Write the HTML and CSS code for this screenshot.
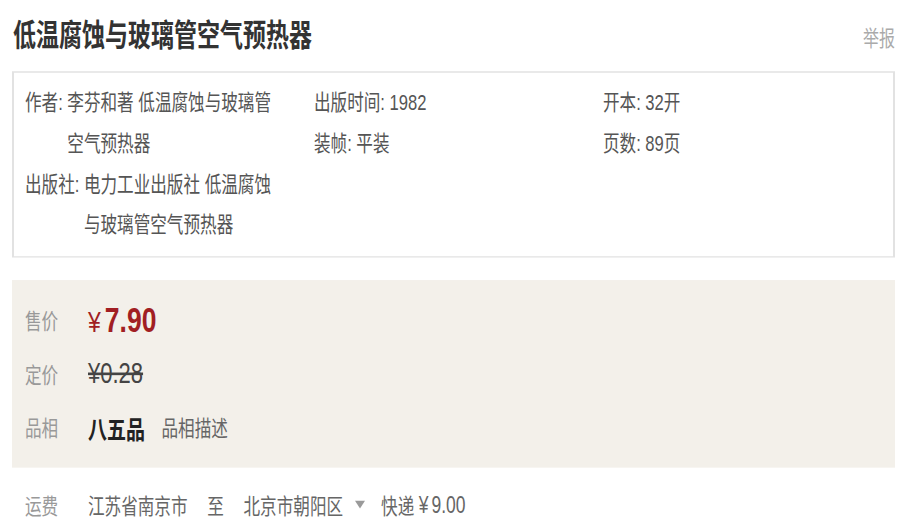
FILE: index.html
```html
<!DOCTYPE html>
<html>
<head>
    <meta charset="utf-8">
    <title>低温腐蚀与玻璃管空气预热器</title>
    <link rel="stylesheet" href="styles.css">
</head>
<body>
    <div class="page">
        <div class="header">
            <h1 class="title">低温腐蚀与玻璃管空气预热器</h1>
            <a class="report">举报</a>
        </div>

        <div class="info-box">
            <div class="info-col">
                <div class="info-item">
                    <span class="info-label">作者:</span>
                    <span class="info-value">李芬和著 低温腐蚀与玻璃管空气预热器</span>
                </div>
                <div class="info-item">
                    <span class="info-label">出版社:</span>
                    <span class="info-value">电力工业出版社 低温腐蚀与玻璃管空气预热器</span>
                </div>
            </div>
            <div class="info-col">
                <div class="info-item">
                    <span class="info-label">出版时间:</span>
                    <span class="info-value">1982</span>
                </div>
                <div class="info-item">
                    <span class="info-label">装帧:</span>
                    <span class="info-value">平装</span>
                </div>
            </div>
            <div class="info-col">
                <div class="info-item">
                    <span class="info-label">开本:</span>
                    <span class="info-value">32开</span>
                </div>
                <div class="info-item">
                    <span class="info-label">页数:</span>
                    <span class="info-value">89页</span>
                </div>
            </div>
        </div>

        <div class="price-box">
            <div class="price-row">
                <span class="row-label">售价</span>
                <span class="sell-price"><span class="yen">¥</span>7.90</span>
            </div>
            <div class="price-row">
                <span class="row-label">定价</span>
                <span class="list-price">¥0.28</span>
            </div>
            <div class="price-row">
                <span class="row-label">品相</span>
                <span class="quality">八五品</span>
                <a class="quality-desc">品相描述</a>
            </div>
        </div>

        <div class="ship-row">
            <span class="row-label">运费</span>
            <span class="ship-from">江苏省南京市</span>
            <span class="ship-to">至</span>
            <span class="ship-dest">北京市朝阳区</span>
            <span class="arrow"></span>
            <span class="ship-way">快递</span>
            <span class="ship-fee"><span class="fee-yen">¥</span>9.00</span>
        </div>
    </div>
</body>
</html>
```

FILE: styles.css
```css
body {
    margin: 0;
    padding: 0;
    min-height: 527px;
    background: #fff;
}

/* the shot is stretched tall, so the page is scaled up vertically */
.page {
    padding: 0 12px;
    transform: scaleY(1.321);
    transform-origin: 0 0;
    font-family: "Liberation Sans", "Noto Sans CJK SC", sans-serif;
    color: #555;
}

.header {
    display: flex;
    justify-content: space-between;
    align-items: center;
    height: 50px;
    margin-bottom: 4px;
}

.title {
    margin: 0;
    padding-left: 1px;
    font-size: 23px;
    font-weight: 700;
    color: #333;
}

.report {
    margin-top: 6px;
    font-size: 16px;
    color: #aaa;
    cursor: pointer;
}

.info-box {
    display: grid;
    grid-template-columns: 289px 289px 1fr;
    border: 1.5px solid #e2e2e2;
    border-left-width: 2px;
    border-right-width: 2px;
    padding: 7px 11px 8px 11px;
    font-size: 16.6px;
    line-height: 31px;
}

.info-col {
    padding-right: 30px;
}

.info-item {
    display: flex;
}

.info-label {
    flex: none;
    margin-right: 4.5px;
}

.price-box {
    margin-top: 16.5px;
    padding: 10.5px 13px 10px;
    background: #f3f0ea;
}

.price-row {
    display: flex;
    align-items: center;
    height: 40.5px;
}

.row-label {
    flex: none;
    width: 63px;
    font-size: 16.6px;
    color: #999;
}

.sell-price {
    font-size: 26.5px;
    font-weight: bold;
    color: #a11e23;
}

.yen {
    margin-right: 4px;
    font-size: 23px;
    font-weight: normal;
}

.list-price {
    font-size: 22px;
    color: #444;
    text-decoration: line-through;
}

.quality {
    font-size: 19px;
    font-weight: bold;
    color: #222;
}

.quality-desc {
    margin-left: 16.5px;
    font-size: 16.6px;
    color: #666;
}

.ship-row {
    display: flex;
    align-items: center;
    height: 27px;
    margin-top: 15px;
    padding-left: 13px;
    font-size: 16.6px;
    color: #666;
}

.ship-to,
.ship-dest {
    margin-left: 19.7px;
}

.arrow {
    width: 0;
    height: 0;
    margin: 0 16.5px 0 11.5px;
    border-top: 6px solid #9a9a9a;
    border-left: 5.3px solid transparent;
    border-right: 5.3px solid transparent;
}

.ship-fee {
    margin-left: 4.5px;
    font-size: 17.5px;
}

.fee-yen {
    margin-right: 3px;
}
```
